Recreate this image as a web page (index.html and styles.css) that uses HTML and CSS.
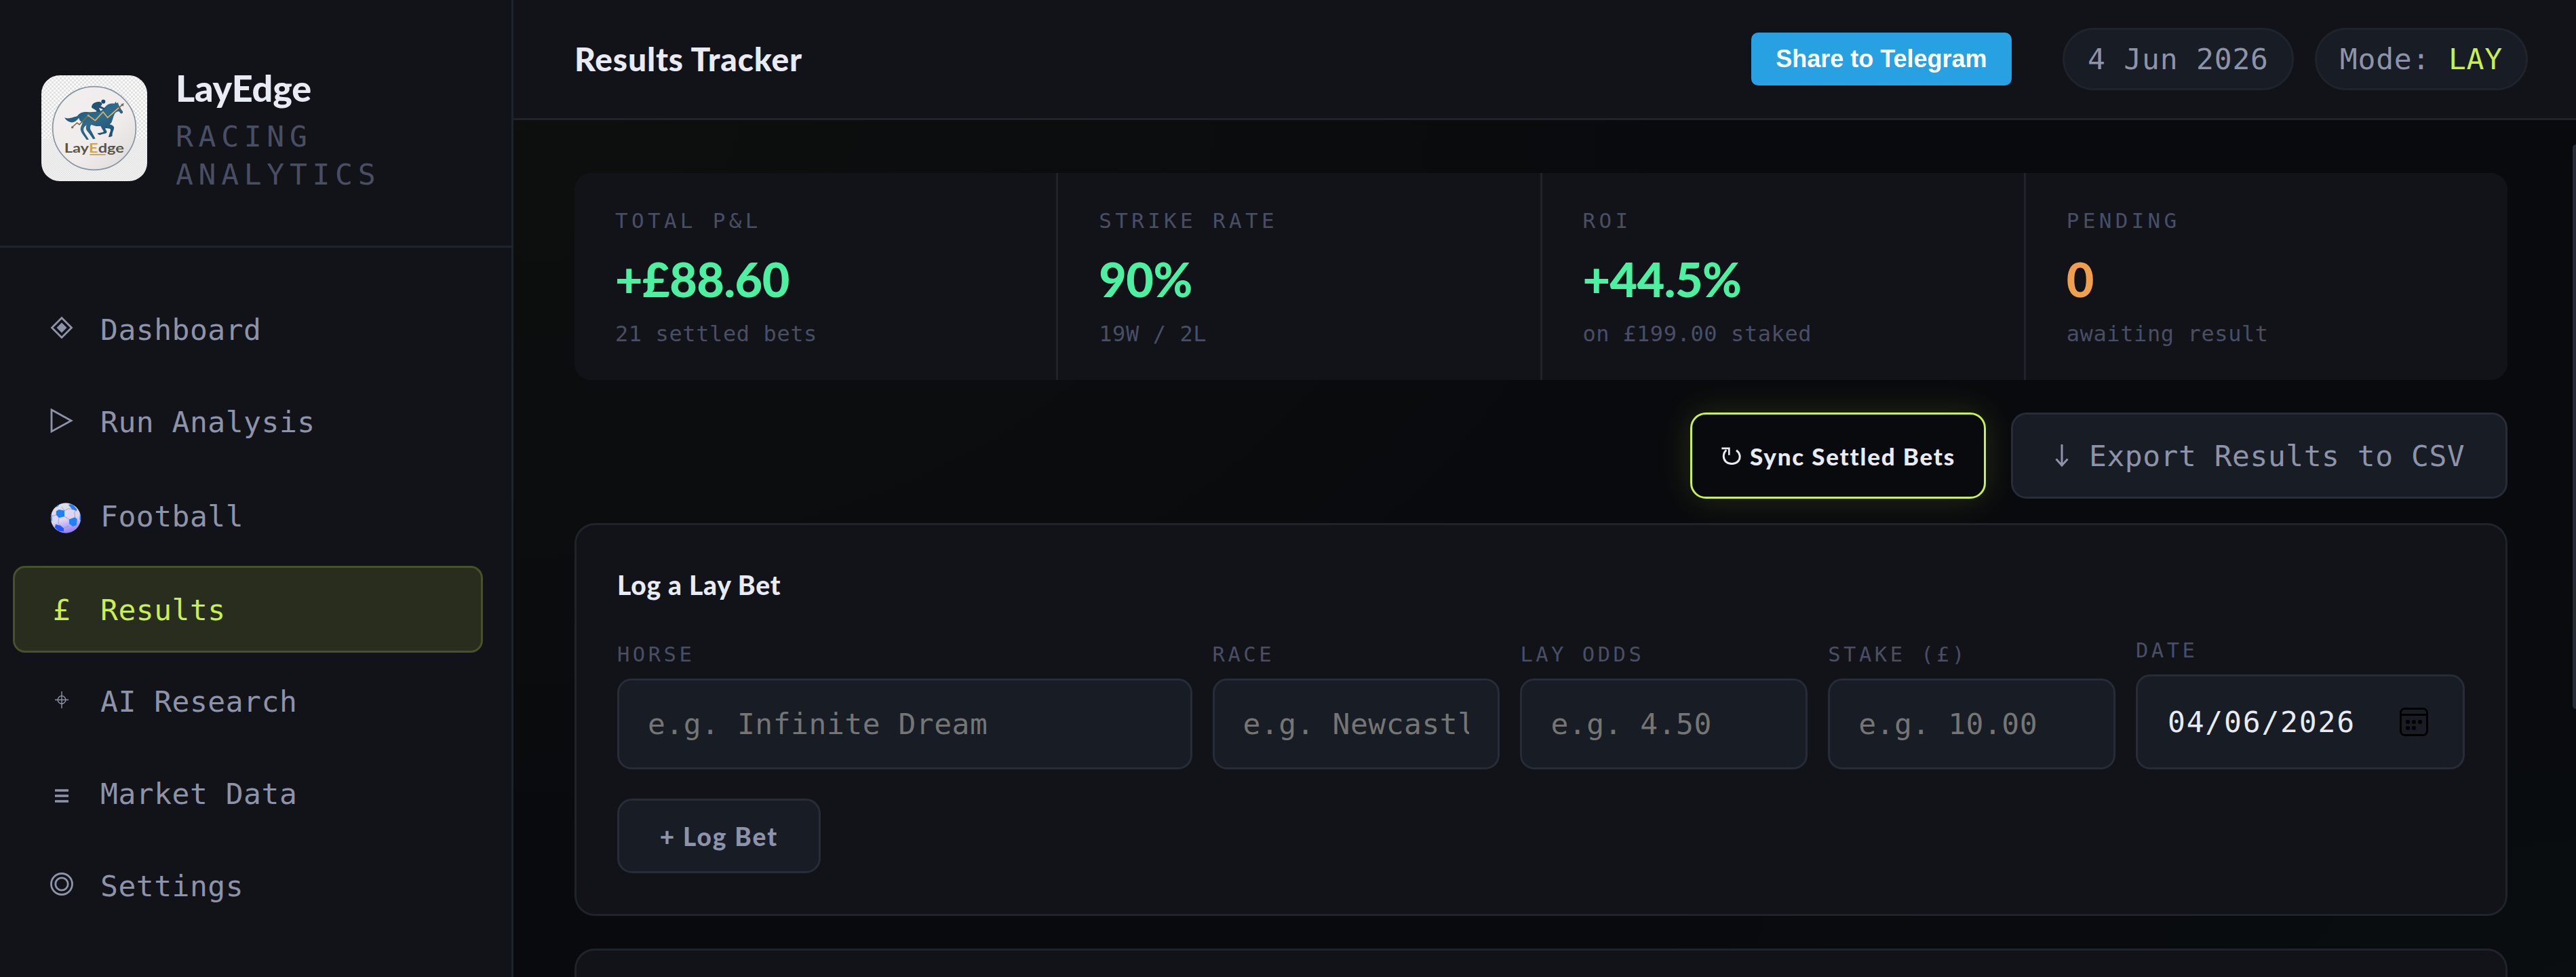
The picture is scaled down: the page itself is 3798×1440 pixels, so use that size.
FILE: index.html
```html
<!DOCTYPE html>
<html lang="en">
<head>
    <meta charset="UTF-8">
    <meta name="viewport" content="width=device-width, initial-scale=1.0">
    <title>LayEdge - Results Tracker</title>
    <link rel="stylesheet" href="styles.css">
</head>
<body>
    <aside class="sidebar">
        <div class="brand">
            <svg class="brand-logo" viewBox="18 18 468 468">
                <defs>
                    <pattern id="checkLarge" width="18" height="18" patternUnits="userSpaceOnUse">
                        <rect width="18" height="18" fill="#fbfbfb"/>
                        <rect width="9" height="9" fill="#e2e2e2"/>
                        <rect x="9" y="9" width="9" height="9" fill="#e2e2e2"/>
                    </pattern>
                    <pattern id="checkSmall" width="10" height="10" patternUnits="userSpaceOnUse">
                        <rect width="10" height="10" fill="#f6f6f6"/>
                        <rect width="5" height="5" fill="#e0e0e0"/>
                        <rect x="5" y="5" width="5" height="5" fill="#e0e0e0"/>
                    </pattern>
                    <linearGradient id="disc" x1="0" y1="0" x2="1" y2="1">
                        <stop offset="0" stop-color="#f2eff0"/>
                        <stop offset="0.6" stop-color="#f0ecec"/>
                        <stop offset="1" stop-color="#dcd8d8"/>
                    </linearGradient>
                    <linearGradient id="coat" x1="0" y1="0" x2="1" y2="1">
                        <stop offset="0" stop-color="#1d4a6c"/>
                        <stop offset="0.5" stop-color="#2f6c8c"/>
                        <stop offset="1" stop-color="#1a4163"/>
                    </linearGradient>
                </defs>
                <rect x="18" y="18" width="468" height="290" fill="url(#checkLarge)"/>
                <rect x="18" y="300" width="468" height="186" fill="url(#checkSmall)"/>
                <circle cx="252" cy="252" r="184" fill="url(#disc)" stroke="#8694a3" stroke-width="5"/>
                <!-- horse -->
                <path fill="url(#coat)" d="M120 204 C132 212 144 207 158 204 C166 200 172 201 178 197 C186 184 202 179 222 180 C244 182 262 178 280 176 C292 170 298 158 308 150 C318 143 330 142 341 143 L347 134 L350 142 L357 138 C358 150 366 158 372 170 L378 178 C380 186 374 189 368 186 L362 178 C354 176 348 180 342 188 C336 200 334 212 330 222 C328 228 324 232 320 235 C334 238 342 246 339 254 C335 266 330 276 332 286 C326 290 320 292 315 290 L320 274 C324 264 326 258 322 254 C312 254 302 250 300 254 C306 262 310 268 306 273 C296 278 284 278 276 282 C272 280 266 278 266 274 C276 272 288 272 294 266 C288 258 284 250 280 242 C264 246 248 240 238 236 C232 246 232 254 240 266 C246 276 250 286 257 298 L246 300 C240 288 230 276 222 266 C214 258 214 246 218 238 C206 246 202 254 206 266 C212 278 220 288 228 302 L218 303 C208 288 196 276 192 262 C188 248 198 240 200 226 C190 222 184 214 184 206 C174 220 162 228 148 226 C136 222 126 216 120 204 Z"/>
                <!-- jockey -->
                <circle cx="292" cy="134" r="9" fill="#1f4b6b"/>
                <path fill="#235272" d="M240 160 C240 144 254 136 270 135 C280 134 288 140 286 148 L280 154 L300 164 L296 170 L274 162 C272 166 280 172 280 180 L262 180 C264 172 250 170 240 160 Z"/>
                <polyline points="156,246 176,228 186,236 226,196 256,218 291,180 311,205 376,148" fill="none" stroke="#7d6a48" stroke-width="5"/>
                <polyline points="226,196 256,218 291,180 311,205 360,162" fill="none" stroke="#d9b168" stroke-width="5"/>
                <circle cx="155" cy="248" r="5" fill="#7d6a48"/>
                <circle cx="226" cy="196" r="5" fill="#c9a25a"/>
                <path d="M383 141 L380 156 L369 146 Z" fill="#7d6a48"/>
                <text class="logo-text" x="119" y="361" textLength="265" lengthAdjust="spacingAndGlyphs">Lay<tspan fill="#d5a244">E</tspan>dge</text>
                <rect x="232" y="366" width="70" height="5" fill="#c79a4c"/>
            </svg>
            <div class="brand-text">
                <div class="brand-name">LayEdge</div>
                <div class="brand-sub">RACING ANALYTICS</div>
            </div>
        </div>

        <nav class="nav">
            <a class="nav-item">
                <span class="nav-icon"><svg width="34" height="34" viewBox="0 0 34 34"><path d="M17 2.5 L31.5 17 L17 31.5 L2.5 17 Z" fill="none" stroke="currentColor" stroke-width="2.8"/><path d="M17 9.5 L24.5 17 L17 24.5 L9.5 17 Z" fill="currentColor"/></svg></span>
                <span>Dashboard</span>
            </a>
            <a class="nav-item nav-item-run">
                <span class="nav-icon"><svg width="36" height="38" viewBox="0 0 36 38"><path d="M3 3 L32 19 L3 35 Z" fill="none" stroke="currentColor" stroke-width="2.8"/></svg></span>
                <span>Run Analysis</span>
            </a>
            <a class="nav-item nav-item-football">
                <span class="nav-icon nav-icon-ball">
                    <svg width="46" height="45" viewBox="42 32 138 136">
                        <defs>
                            <linearGradient id="ball" x1="0.3" y1="0" x2="0.6" y2="1">
                                <stop offset="0" stop-color="#e2e2e2"/>
                                <stop offset="0.55" stop-color="#dcd4f2"/>
                                <stop offset="1" stop-color="#8d78fa"/>
                            </linearGradient>
                            <clipPath id="ballClip"><circle cx="111" cy="100" r="67"/></clipPath>
                        </defs>
                        <g clip-path="url(#ballClip)">
                            <rect x="42" y="32" width="138" height="136" fill="url(#ball)"/>
                            <g fill="#2080fa">
                                <path d="M68 70 L80 62 L105 67 L105 93 L80 99 L68 86 Z"/>
                                <path d="M126 106 L152 96 L162 106 L158 132 L142 138 L126 126 Z"/>
                                <path d="M122 40 L140 38 L160 60 L160 68 L140 62 Z"/>
                                <path d="M66 128 L88 134 L102 146 L102 160 L78 158 L62 142 Z" fill="#2456fb"/>
                                <path d="M42 88 L48 80 L50 112 L44 116 Z"/>
                                <path d="M60 56 L80 38 L88 36 L76 48 Z"/>
                                <path d="M174 74 L180 90 L178 116 L173 106 Z"/>
                            </g>
                            <path d="M105 67 L124 58 L142 62 M105 93 L126 106 M80 99 L78 124 L88 134 M102 146 L126 134 M105 67 L92 50 M68 86 L48 92 M152 96 L150 72 L160 66" fill="none" stroke="#8d88a5" stroke-width="2"/>
                        </g>
                    </svg>
                </span>
                <span>Football</span>
            </a>
            <a class="nav-item active">
                <span class="nav-icon">£</span>
                <span>Results</span>
            </a>
            <a class="nav-item nav-item-ai">
                <span class="nav-icon"><svg width="20" height="25" viewBox="0 0 20 25"><circle cx="10" cy="12.5" r="5.8" fill="none" stroke="currentColor" stroke-width="1.4"/><path d="M10 0 V25 M0 12.5 H20" stroke="currentColor" stroke-width="1.4"/></svg></span>
                <span>AI Research</span>
            </a>
            <a class="nav-item">
                <span class="nav-icon nav-icon-lines"><svg width="20" height="20" viewBox="0 0 20 20"><path d="M0 2 H20 M0 10 H20 M0 18 H20" stroke="currentColor" stroke-width="3.4"/></svg></span>
                <span>Market Data</span>
            </a>
            <a class="nav-item">
                <span class="nav-icon"><svg width="34" height="34" viewBox="0 0 34 34"><circle cx="17" cy="17" r="15.5" fill="none" stroke="currentColor" stroke-width="2.8"/><circle cx="17" cy="17" r="9.2" fill="none" stroke="currentColor" stroke-width="2.8"/></svg></span>
                <span>Settings</span>
            </a>
        </nav>
    </aside>

    <div class="main">
        <header class="topbar">
            <h1 class="page-title">Results Tracker</h1>
            <div class="topbar-right">
                <button class="telegram-btn">Share to Telegram</button>
                <div class="pill">4 Jun 2026</div>
                <div class="pill">Mode: <span class="accent">LAY</span></div>
            </div>
        </header>

        <div class="content">
            <div class="stats">
                <div class="stat">
                    <div class="stat-label">TOTAL P&amp;L</div>
                    <div class="stat-value">+£88.60</div>
                    <div class="stat-sub">21 settled bets</div>
                </div>
                <div class="stat">
                    <div class="stat-label">STRIKE RATE</div>
                    <div class="stat-value">90%</div>
                    <div class="stat-sub">19W / 2L</div>
                </div>
                <div class="stat">
                    <div class="stat-label">ROI</div>
                    <div class="stat-value">+44.5%</div>
                    <div class="stat-sub">on £199.00 staked</div>
                </div>
                <div class="stat">
                    <div class="stat-label">PENDING</div>
                    <div class="stat-value pending">0</div>
                    <div class="stat-sub">awaiting result</div>
                </div>
            </div>

            <div class="actions">
                <button class="sync-btn">
                    <svg width="29" height="26" viewBox="114 175 87 78"><path d="M180 189 C196 200 200 220 190 235 C178 251 148 253 134 240 C120 226 120 202 136 188" fill="none" stroke="currentColor" stroke-width="9"/><path d="M115 180.5 H148 V210" fill="none" stroke="currentColor" stroke-width="8"/></svg>
                    <span>Sync Settled Bets</span>
                </button>
                <button class="export-btn">
                    <svg width="20" height="33" viewBox="0 0 20 33"><path d="M10 0 V30 M1.5 21.5 L10 31 L18.5 21.5" fill="none" stroke="currentColor" stroke-width="3"/></svg>
                    <span>Export Results to CSV</span>
                </button>
            </div>

            <section class="card">
                <h2 class="card-title">Log a Lay Bet</h2>
                <div class="form-grid">
                    <div class="field">
                        <label for="horse">HORSE</label>
                        <input type="text" id="horse" placeholder="e.g. Infinite Dream">
                    </div>
                    <div class="field">
                        <label for="race">RACE</label>
                        <input type="text" id="race" placeholder="e.g. Newcastle 14:30">
                    </div>
                    <div class="field">
                        <label for="odds">LAY ODDS</label>
                        <input type="text" id="odds" placeholder="e.g. 4.50">
                    </div>
                    <div class="field">
                        <label for="stake">STAKE (£)</label>
                        <input type="text" id="stake" placeholder="e.g. 10.00">
                    </div>
                    <div class="field">
                        <label>DATE</label>
                        <div class="date-input">
                            <span>04/06/2026</span>
                            <svg width="42" height="42" viewBox="0 0 42 42"><rect x="1.5" y="1.5" width="39" height="39" rx="6" fill="none" stroke="#000" stroke-width="3"/><path d="M1 10.5 H41" stroke="#000" stroke-width="3"/><circle cx="12" cy="21" r="3.1"/><circle cx="21" cy="21" r="3.1"/><circle cx="30" cy="21" r="3.1"/><circle cx="12" cy="30" r="3.1"/><circle cx="21" cy="30" r="3.1"/></svg>
                        </div>
                    </div>
                </div>
                <button class="log-btn">+ Log Bet</button>
            </section>

            <section class="card card-history"></section>

            <div class="scrollbar"></div>
        </div>
    </div>
</body>
</html>
```

FILE: styles.css
```css
:root {
    --bg: #090a0d;
    --surface: #111318;
    --surface2: #181c24;
    --border: #1f232c;
    --border2: #272c38;
    --text: #e8eaf4;
    --muted: #8e93a9;
    --dim: #4a4e65;
    --accent: #c8f04e;
    --green: #4df0a0;
    --orange: #f0a04c;
    --mono: 'DejaVu Sans Mono', monospace;
    --sans: Lato, sans-serif;
}

* {
    box-sizing: border-box;
    margin: 0;
    padding: 0;
}

body {
    display: flex;
    height: 1440px;
    overflow: hidden;
    background: var(--bg);
    color: var(--text);
    font-family: var(--mono);
}

button {
    font-family: var(--sans);
    cursor: pointer;
}

svg {
    display: block;
    flex-shrink: 0;
}

/* Sidebar */
.sidebar {
    width: 757px;
    flex-shrink: 0;
    background: var(--surface);
    border-right: 3px solid var(--border);
}

.brand {
    display: flex;
    height: 365px;
    padding: 0 61px;
    gap: 42px;
    border-bottom: 3px solid var(--border);
}

.brand-logo {
    width: 156px;
    height: 156px;
    margin-top: 111px;
    border-radius: 27px;
}

.logo-text {
    font-family: Lato, sans-serif;
    font-weight: 700;
    font-size: 57px;
    fill: #5c5444;
}

.brand-text {
    padding-top: 98px;
}

.brand-name {
    font-family: var(--sans);
    font-size: 54px;
    font-weight: 900;
    line-height: 64px;
    letter-spacing: -0.2px;
}

.brand-sub {
    margin-top: 11px;
    font-size: 43px;
    line-height: 56px;
    letter-spacing: 7.7px;
    color: var(--dim);
}

.nav {
    display: flex;
    flex-direction: column;
    gap: 8px;
    padding: 56px 42px 0 19px;
}

.nav-item {
    display: flex;
    align-items: center;
    height: 128px;
    padding: 1px 0 0 51px;
    gap: 39px;
    border: 3px solid transparent;
    border-radius: 18px;
    color: var(--muted);
    font-size: 43px;
    line-height: 54px;
    letter-spacing: 0.5px;
}

.nav-item-run {
    height: 129px;
}

.nav-item-football {
    height: 132px;
}

.nav-item-ai {
    height: 127px;
}

.nav-item.active {
    background: #282d1e;
    border-color: #465229;
    color: var(--accent);
}

.nav-icon {
    display: flex;
    width: 36px;
    justify-content: center;
    padding-bottom: 5px;
}

.nav-item.active .nav-icon {
    padding-bottom: 0;
}

.nav-icon-ball {
    justify-content: flex-start;
    padding: 5px 0 0 1px;
}

.nav-icon-lines {
    padding: 6px 0 0;
}

/* Topbar */
.main {
    display: flex;
    flex: 1;
    flex-direction: column;
    min-width: 0;
}

.topbar {
    display: flex;
    align-items: center;
    justify-content: space-between;
    height: 177px;
    flex-shrink: 0;
    padding: 0 71px 0 90px;
    background: var(--surface);
    border-bottom: 3px solid var(--border);
}

.page-title {
    font-family: var(--sans);
    font-size: 48px;
    font-weight: 900;
    line-height: 60px;
    letter-spacing: 0.8px;
}

.topbar-right {
    display: flex;
    align-items: center;
    gap: 31px;
    padding-bottom: 1px;
}

.telegram-btn {
    width: 384px;
    height: 78px;
    margin-right: 44px;
    border: none;
    border-radius: 10px;
    background: #27a1e1;
    color: #fff;
    font-family: 'Liberation Sans', Arial, sans-serif;
    font-size: 36px;
    font-weight: 700;
}

.pill {
    height: 92px;
    padding: 0 34px;
    border: 3px solid var(--border);
    border-radius: 46px;
    background: var(--surface2);
    color: var(--muted);
    font-size: 43px;
    line-height: 87px;
    letter-spacing: 0.8px;
    white-space: nowrap;
}

.accent {
    color: var(--accent);
}

/* Content */
.content {
    position: relative;
    flex: 1;
    min-height: 0;
    overflow: hidden;
    padding: 78px 101px 0 90px;
    background:
        radial-gradient(ellipse 60% 90% at 0% 0%, rgba(200, 240, 78, 0.024), transparent 100%),
        radial-gradient(ellipse 50% 60% at 100% 100%, rgba(0, 220, 200, 0.014), transparent 100%),
        var(--bg);
}

.stats {
    display: grid;
    grid-template-columns: repeat(4, 1fr);
    gap: 3px;
    height: 305px;
    border-radius: 26px;
    overflow: hidden;
    background: var(--border);
}

.stat {
    padding: 52px 60px 0;
    background: var(--surface);
    white-space: nowrap;
}

.stat-label {
    font-size: 31px;
    line-height: 36px;
    letter-spacing: 5.3px;
    color: var(--dim);
}

.stat-value {
    margin-top: 28px;
    font-family: var(--sans);
    font-size: 70px;
    font-weight: 900;
    line-height: 80px;
    letter-spacing: -0.5px;
    color: var(--green);
}

.stat-value.pending {
    color: var(--orange);
}

.stat-sub {
    margin-top: 23px;
    font-size: 32px;
    line-height: 36px;
    letter-spacing: 0.6px;
    color: var(--dim);
}

.actions {
    display: flex;
    justify-content: flex-end;
    gap: 37px;
    margin-top: 48px;
}

.sync-btn,
.export-btn {
    display: flex;
    align-items: center;
    height: 127px;
    border-radius: 23px;
}

.sync-btn {
    width: 436px;
    padding-left: 43px;
    gap: 13px;
    border: 3px solid var(--accent);
    background: var(--bg);
    box-shadow: 0 0 50px rgba(200, 240, 78, 0.15);
    color: var(--text);
    font-size: 35px;
    font-weight: 900;
    letter-spacing: 1.8px;
}

.export-btn {
    width: 732px;
    padding-left: 62px;
    gap: 30px;
    border: 3px solid var(--border2);
    background: var(--surface2);
    color: var(--muted);
    font-family: var(--mono);
    font-size: 43px;
    letter-spacing: 0.5px;
}

.card {
    height: 579px;
    margin-top: 36px;
    padding: 66px 60px 0;
    border: 3px solid var(--border);
    border-radius: 30px;
    background: var(--surface);
}

.card-history {
    margin-top: 48px;
}

.card-title {
    font-family: var(--sans);
    font-size: 39px;
    font-weight: 900;
    line-height: 44px;
    letter-spacing: 0.8px;
}

.form-grid {
    display: grid;
    grid-template-columns: 2fr 1fr 1fr 1fr 485px;
    gap: 30px;
    align-items: end;
    margin-top: 57px;
}

.field {
    min-width: 0;
}

.field label {
    display: block;
    margin-bottom: 17px;
    font-size: 30.5px;
    line-height: 36px;
    letter-spacing: 4.5px;
    color: var(--dim);
}

.field input,
.date-input {
    width: 100%;
    height: 134px;
    padding: 0 42px;
    border: 3px solid var(--border2);
    border-radius: 21px;
    background: var(--surface2);
    color: var(--text);
    font-family: var(--mono);
    font-size: 43px;
    letter-spacing: 0.5px;
}

.field input {
    display: block;
}

.field input::placeholder {
    color: #757575;
}

.date-input {
    display: flex;
    align-items: center;
    justify-content: space-between;
    height: 140px;
    padding: 0 51px 0 44px;
    letter-spacing: 1.8px;
}

.log-btn {
    display: block;
    width: 300px;
    height: 110px;
    margin-top: 43px;
    border: 3px solid var(--border2);
    border-radius: 22px;
    background: var(--surface2);
    color: var(--muted);
    font-size: 37px;
    font-weight: 900;
    letter-spacing: 2px;
}

/* Thumb of the overlay scrollbar */
.scrollbar {
    position: absolute;
    top: 36px;
    right: -5px;
    width: 10px;
    height: 832px;
    border-radius: 5px;
    background: var(--border2);
}
```
